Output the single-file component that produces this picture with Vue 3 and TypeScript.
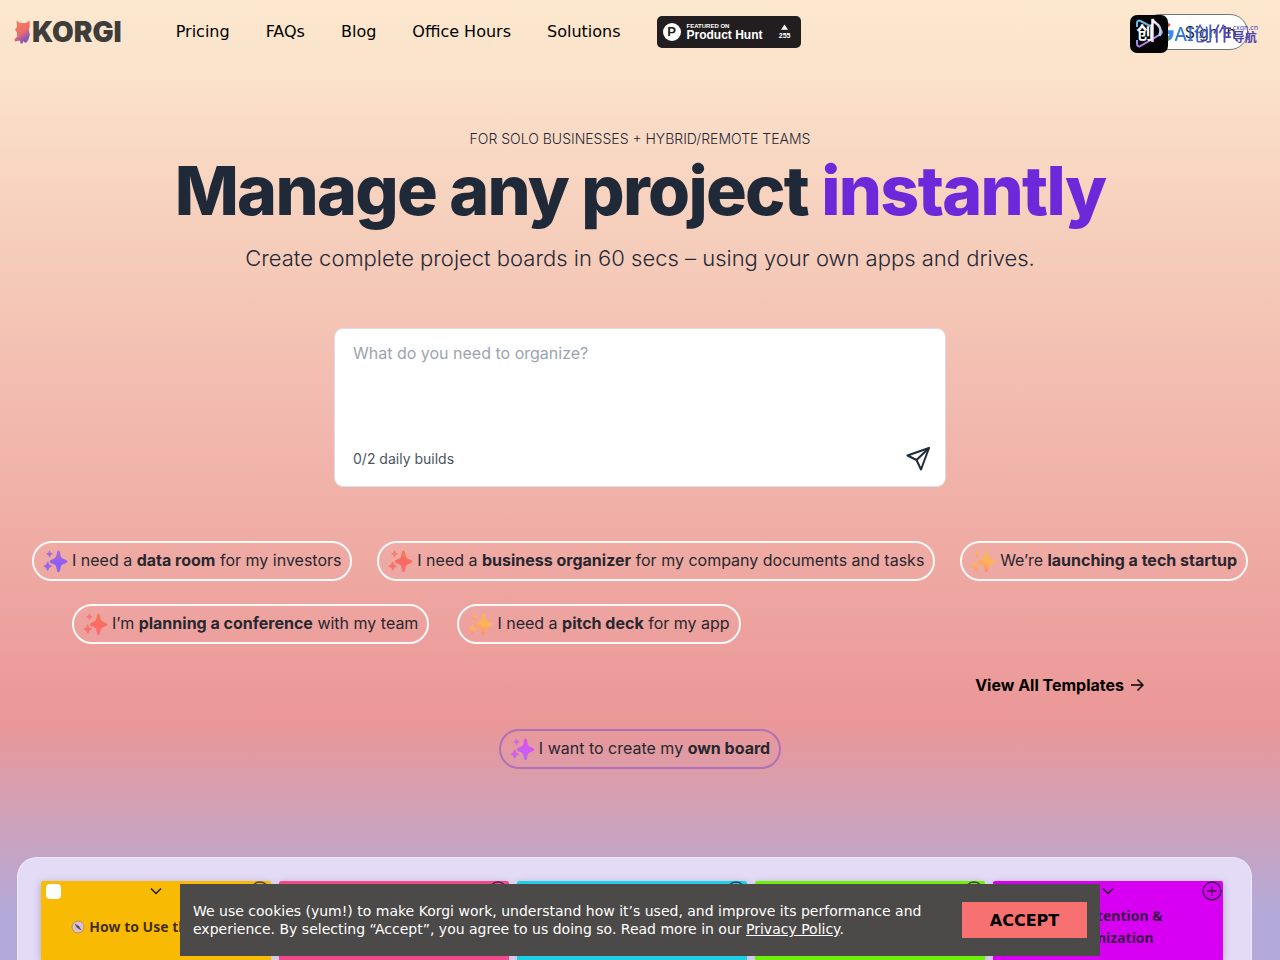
<script setup lang="ts">
import { ref } from 'vue'

interface Template {
  tone: string
  before: string
  strong: string
  after: string
}

interface BoardColumn {
  color: string
  lines: string[]
}

const prompt = ref('')
const cookiesVisible = ref(true)

const navLinks: string[] = ['Pricing', 'FAQs', 'Blog', 'Office Hours', 'Solutions']

const templateRows: Template[][] = [
  [
    { tone: 'violet', before: 'I need a ', strong: 'data room', after: ' for my investors' },
    { tone: 'coral', before: 'I need a ', strong: 'business organizer', after: ' for my company documents and tasks' },
    { tone: 'amber', before: 'We’re ', strong: 'launching a tech startup', after: '' },
  ],
  [
    { tone: 'coral', before: 'I’m ', strong: 'planning a conference', after: ' with my team' },
    { tone: 'amber', before: 'I need a ', strong: 'pitch deck', after: ' for my app' },
  ],
]

const columns: BoardColumn[] = [
  { color: 'yellow', lines: ['How to Use the Board'] },
  { color: 'pink', lines: [] },
  { color: 'cyan', lines: [] },
  { color: 'green', lines: [] },
  { color: 'magenta', lines: ['Retention &', 'Optimization'] },
]
</script>

<template>
  <div class="page">
    <svg class="defs" width="0" height="0" aria-hidden="true">
      <defs>
        <linearGradient id="tone-violet" x1="0" y1="0" x2="0" y2="1">
          <stop offset="0" stop-color="#b36bd0" />
          <stop offset="0.6" stop-color="#8b5cf6" />
          <stop offset="1" stop-color="#8467fa" />
        </linearGradient>
        <linearGradient id="tone-coral" x1="0.7" y1="0" x2="0.3" y2="1">
          <stop offset="0" stop-color="#f0805a" />
          <stop offset="0.5" stop-color="#fb6a60" />
          <stop offset="1" stop-color="#fb6f86" />
        </linearGradient>
        <linearGradient id="tone-amber" x1="0.7" y1="0" x2="0.3" y2="1">
          <stop offset="0" stop-color="#f2b758" />
          <stop offset="0.5" stop-color="#fdb35a" />
          <stop offset="1" stop-color="#fb8a6b" />
        </linearGradient>
        <linearGradient id="tone-orchid" x1="0.7" y1="0" x2="0.3" y2="1">
          <stop offset="0" stop-color="#e24fe8" />
          <stop offset="0.5" stop-color="#cf5bf3" />
          <stop offset="1" stop-color="#b66bf0" />
        </linearGradient>
        <linearGradient id="corgi" x1="0.3" y1="0" x2="0.8" y2="1">
          <stop offset="0" stop-color="#f47f5c" />
          <stop offset="0.5" stop-color="#ee6a6c" />
          <stop offset="0.75" stop-color="#9a5aa8" />
          <stop offset="1" stop-color="#6a55c4" />
        </linearGradient>
        <linearGradient id="mark" x1="0" y1="0" x2="0.4" y2="1">
          <stop offset="0" stop-color="#5ec4e6" />
          <stop offset="0.5" stop-color="#8e9be8" />
          <stop offset="1" stop-color="#c07be8" />
        </linearGradient>
        <linearGradient id="note" x1="0" y1="0" x2="1" y2="1">
          <stop offset="0" stop-color="#ffffff" />
          <stop offset="0.5" stop-color="#f3c9f6" />
          <stop offset="1" stop-color="#7fe6ee" />
        </linearGradient>
        <symbol id="sparkles" viewBox="0 0 24 24">
          <path d="M15 1.500c1 0 1.500 1.200 1.900 3.800.5 3.200 1.200 4 3.800 4.900 2 .7 3.100 1.200 3.100 2.300s-1.100 1.700-3.100 2.300c-2.600.9-3.300 1.700-3.800 4.700-.4 2.500-.9 3.700-1.900 3.700s-1.500-1.200-1.900-3.700c-.5-3-1.200-3.800-3.800-4.700-2-.6-3.100-1.200-3.100-2.300s1.100-1.600 3.100-2.300c2.600-.9 3.300-1.700 3.800-4.900.4-2.600.9-3.800 1.900-3.800z" />
          <path opacity="0.8" d="M6 1.500c.6 0 .7.800.9 1.500.2.600.5.800 1 .9.700.2 1.300.4 1.300.9s-.6.700-1.300.9c-.5.200-.8.400-1 1-.2.800-.3 1.500-.9 1.500s-.7-.7-.9-1.500c-.2-.6-.5-.8-1-1-.7-.2-1.300-.4-1.300-.9s.6-.7 1.300-.9c.5-.1.800-.3 1-.9.200-.7.300-1.500.9-1.500z" />
          <path opacity="0.9" d="M4.200 12.500c.7 0 .9 1 1.200 2 .3.900.7 1.200 1.400 1.400.8.300 1.500.5 1.500 1.200s-.7.900-1.500 1.200c-.7.200-1.100.6-1.400 1.500-.3 1-.5 1.900-1.200 1.900s-.9-.9-1.200-1.900c-.3-.9-.7-1.300-1.400-1.500-.8-.3-1.500-.5-1.500-1.200s.7-.9 1.500-1.200c.7-.2 1.100-.5 1.400-1.400.3-1 .5-2 1.200-2z" />
        </symbol>
      </defs>
    </svg>

    <header class="header">
      <a class="logo" href="#" aria-label="KORGI">
        <svg class="corgi" width="17" height="24" viewBox="0 0 17 24" aria-hidden="true">
          <path d="M2.500.5 6 3h6L15.500.5l.3 6-1 3 1 5.500-1.300 4.500-2 3H10.500L9.500 21 8.500 23.500H6.500L6 20.500 1 21.500l-.5-2.200 2.700-2.500-.2-4L1 9.500l2-2.500z" fill="url(#corgi)" />
        </svg>
        <span class="wordmark">KORGI</span>
      </a>

      <nav class="nav">
        <a v-for="link in navLinks" :key="link" href="#">{{ link }}</a>
      </nav>

      <a class="hunt" href="#">
        <span class="hunt-mark">P</span>
        <span class="hunt-text">
          <span class="hunt-small">FEATURED ON</span>
          <span class="hunt-name">Product Hunt</span>
        </span>
        <span class="hunt-votes">
          <svg width="7" height="6" viewBox="0 0 8 6" aria-hidden="true"><path d="M4 0l4 6H0z" fill="#fff" /></svg>
          255
        </span>
      </a>

      <div class="account">
        <button class="sign-in" type="button">
          <svg width="20" height="20" viewBox="0 0 24 24" aria-hidden="true">
            <path fill="#4285f4" d="M23.500 12.300c0-.8-.1-1.600-.2-2.300H12v4.500h6.500a5.500 5.500 0 0 1-2.400 3.600v3h3.900c2.200-2.100 3.500-5.100 3.500-8.800z" />
            <path fill="#34a853" d="M12 24c3.200 0 6-1.100 8-2.900l-3.900-3a7.200 7.200 0 0 1-10.800-3.800h-4v3.100A12 12 0 0 0 12 24z" />
            <path fill="#fbbc05" d="M5.300 14.300a7.200 7.200 0 0 1 0-4.600V6.600h-4a12 12 0 0 0 0 10.800z" />
            <path fill="#ea4335" d="M12 4.800c1.800 0 3.300.6 4.600 1.800l3.400-3.400A12 12 0 0 0 1.300 6.600l4 3.100A7.200 7.200 0 0 1 12 4.800z" />
          </svg>
          Sign in
        </button>
        <div class="stamp">
          <span class="stamp-icon">
            <svg width="38" height="38" viewBox="0 0 38 38" aria-hidden="true">
              <path d="M7 12V8c0-2 1.500-3 3.500-2L20 11M7 25v4c0 2 1.800 3 3.500 2l19-11c3-1.500 3-3.500 1-5" fill="none" stroke="url(#mark)" stroke-width="2" />
              <path d="M22.500 27V4c1 5 8 4 8 12l-1 5" fill="none" stroke="url(#note)" stroke-width="2.500" />
            </svg>
            <span class="stamp-glyph">创</span>
          </span>
          <span class="stamp-name">AI创作</span>
          <span class="stamp-side">
            <span class="stamp-host">cxgn.cn</span>
            <span class="stamp-nav">导航</span>
          </span>
        </div>
      </div>
    </header>

    <main class="main">
      <section class="hero">
        <p class="eyebrow">FOR SOLO BUSINESSES + HYBRID/REMOTE TEAMS</p>
        <h1>Manage any project <span>instantly</span></h1>
        <p class="lead">Create complete project boards in 60 secs – using your own apps and drives.</p>
      </section>

      <form class="composer" @submit.prevent>
        <textarea v-model="prompt" aria-label="What do you need to organize?" placeholder="What do you need to organize?"></textarea>
        <div class="composer-foot">
          <span>0/2 daily builds</span>
          <button type="submit" aria-label="Send">
            <svg width="24" height="24" viewBox="0 0 24 24" fill="none" stroke="#1f2937" stroke-width="2" stroke-linejoin="round" aria-hidden="true">
              <path d="M23 1 1.500 8.500 10.500 13 15 22.500z" />
              <path d="M23 1 10.500 13" />
            </svg>
          </button>
        </div>
      </form>

      <section class="templates">
        <div v-for="(row, i) in templateRows" :key="i" class="row" :class="{ inset: i === 1 }">
          <button v-for="item in row" :key="item.strong" class="pill" type="button">
            <svg width="25" height="24" :class="item.tone" aria-hidden="true"><use href="#sparkles" /></svg>
            <span class="pill-label">{{ item.before }}<strong>{{ item.strong }}</strong>{{ item.after }}</span>
          </button>
        </div>
      </section>

      <a class="view-all" href="#">
        View All Templates
        <svg width="14" height="14" viewBox="0 0 14 14" fill="none" stroke="#000" stroke-width="1.500" aria-hidden="true">
          <path d="M1 7h12M7.500 1.500 13 7l-5.500 5.500" />
        </svg>
      </a>

      <button class="pill own" type="button">
        <svg width="25" height="24" class="orchid" aria-hidden="true"><use href="#sparkles" /></svg>
        <span class="pill-label">I want to create my <strong>own board</strong></span>
      </button>

      <section class="board">
        <article v-for="col in columns" :key="col.color" class="column" :class="col.color">
          <div class="column-bar">
            <input type="checkbox" :aria-label="'Select ' + col.color + ' column'" />
            <svg width="12" height="8" viewBox="0 0 12 8" fill="none" stroke="#1f1a2c" stroke-width="1.500" aria-hidden="true">
              <path d="M1 1.500 6 6.500l5-5" />
            </svg>
            <svg class="plus" width="20" height="20" viewBox="0 0 20 20" fill="none" stroke="#1f1a2c" stroke-opacity="0.8" stroke-width="1.400" aria-hidden="true">
              <circle cx="10" cy="10" r="9" />
              <path d="M10 5v10M5 10h10" />
            </svg>
          </div>
          <h2 v-if="col.lines.length" :class="{ single: col.lines.length === 1 }">
            <span v-for="(line, n) in col.lines" :key="line" class="line">
              <svg v-if="n === 0" width="14" height="14" viewBox="0 0 14 14" aria-hidden="true">
                <circle cx="7" cy="7" r="6" fill="#d8c4c8" stroke="#b98f6a" stroke-width="1" />
                <path d="M3.500 3.500 8 6l2.500 4.500L6 8z" fill="#6a4a6c" />
              </svg>
              {{ line }}
            </span>
          </h2>
        </article>
      </section>
    </main>

    <aside v-if="cookiesVisible" class="cookies">
      <p>
        We use cookies (yum!) to make Korgi work, understand how it’s used, and improve its performance and experience. By
        selecting “Accept”, you agree to us doing so. Read more in our <a href="#">Privacy Policy</a>.
      </p>
      <button type="button" @click="cookiesVisible = false">ACCEPT</button>
    </aside>
  </div>
</template>

<style>
body {
  margin: 0;
}
</style>

<style scoped>
* {
  box-sizing: border-box;
}

.page {
  display: flex;
  flex-direction: column;
  height: 100vh;
  min-height: 940px;
  overflow: hidden;
  font-family: Inter, "Liberation Sans", sans-serif;
  color: #1f2937;
  background: linear-gradient(180deg, #fce7cf 0%, #fbe3cb 7%, #f5cab9 28%, #eb9797 75%, #b3a9d8 95%, #b3a9d8 100%);
}

.defs {
  position: absolute;
}

a {
  color: inherit;
  text-decoration: none;
}

button {
  font: inherit;
  color: inherit;
  cursor: pointer;
}

.header {
  display: flex;
  align-items: center;
  height: 64px;
  padding: 0 32px 0 14px;
}

.logo {
  display: flex;
  align-items: center;
  gap: 1px;
}

.wordmark {
  font-size: 28px;
  line-height: 32px;
  font-weight: 900;
  color: #3f3d3a;
}

.nav {
  display: flex;
  gap: 36px;
  margin-left: 54px;
  font-family: "DejaVu Sans", sans-serif;
  font-size: 16px;
  line-height: 24px;
  color: #000;
}

.hunt {
  display: flex;
  align-items: center;
  width: 144px;
  height: 32px;
  margin-left: 36px;
  padding: 0 10px 0 6px;
  border-radius: 5px;
  background: #221e20;
  color: #fff;
  font-family: "Liberation Sans", Arial, sans-serif;
  font-weight: 700;
}

.hunt-mark {
  width: 18px;
  height: 18px;
  border-radius: 50%;
  background: #fff;
  color: #221e20;
  font-size: 13px;
  line-height: 18px;
  text-align: center;
}

.hunt-text {
  display: flex;
  flex-direction: column;
  margin-left: 6px;
}

.hunt-small {
  font-size: 6px;
  line-height: 6px;
}

.hunt-name {
  font-size: 12px;
  line-height: 12px;
  white-space: nowrap;
}

.hunt-votes {
  display: flex;
  flex-direction: column;
  align-items: center;
  gap: 2px;
  margin-left: auto;
  font-size: 7px;
  line-height: 8px;
}

.account {
  position: relative;
  margin-left: auto;
}

.sign-in {
  display: flex;
  align-items: center;
  gap: 11px;
  height: 36px;
  padding: 0 11px;
  border: 1px solid #747775;
  border-radius: 18px;
  background: #fff;
  font-size: 16px;
  color: #1f1f1f;
}

.stamp {
  position: absolute;
  top: 1px;
  right: -10px;
  display: flex;
  align-items: center;
  font-family: "Noto Sans", "Noto Sans CJK SC", sans-serif;
  color: #4b3fb0;
  white-space: nowrap;
}

.stamp-icon {
  position: relative;
  width: 38px;
  height: 38px;
  border-radius: 7px;
  background: #050508;
}

.stamp-glyph {
  position: absolute;
  top: 8px;
  left: 7px;
  font-size: 17px;
  line-height: 20px;
  font-weight: 700;
  color: #fff;
}

.stamp-name {
  margin-left: 7px;
  font-size: 19px;
  line-height: 24px;
  font-weight: 500;
  color: transparent;
  background: linear-gradient(90deg, #2f7fe0, #5a3fb8);
  background-clip: text;
}

.stamp-side {
  display: flex;
  flex-direction: column;
  margin-left: 1px;
}

.stamp-host {
  font-size: 7px;
  line-height: 7px;
}

.stamp-nav {
  font-size: 12px;
  line-height: 14px;
  font-weight: 700;
}

.main {
  display: flex;
  flex: 1;
  flex-direction: column;
  min-height: 0;
}

.hero {
  padding: 65px 16px 0;
  text-align: center;
}

.eyebrow {
  margin: 0;
  font-size: 14px;
  line-height: 20px;
  font-weight: 300;
}

h1 {
  margin: 7px 0 0;
  font-size: 68px;
  line-height: 68px;
  font-weight: 800;
  letter-spacing: -0.025em;
}

h1 span {
  color: #6d28d9;
}

.lead {
  margin: 16px 0 0;
  font-size: 22px;
  line-height: 36px;
  font-weight: 300;
}

.composer {
  display: flex;
  flex-direction: column;
  width: min(612px, 90%);
  height: 159px;
  margin: 52px auto 0;
  padding: 12px 15px 13px 18px;
  border: 1px solid #dcdfe4;
  border-radius: 9px;
  background: #fff;
}

.composer textarea {
  flex: 1;
  padding: 0;
  border: 0;
  outline: 0;
  resize: none;
  font: inherit;
  font-size: 16px;
  line-height: 24px;
  color: #1f2937;
}

.composer textarea::placeholder {
  color: #9ca3af;
}

.composer-foot {
  display: flex;
  align-items: center;
  justify-content: space-between;
  font-size: 14px;
  line-height: 28px;
  color: #4b5563;
}

.composer-foot button {
  display: flex;
  padding: 0;
  border: 0;
  background: none;
}

.templates {
  display: flex;
  flex-direction: column;
  gap: 23px;
  padding: 54px 32px 0;
}

.row {
  display: flex;
  justify-content: space-between;
  gap: 24px;
}

.row.inset {
  justify-content: flex-start;
  gap: 28px;
  padding-left: 40px;
}

.pill {
  display: flex;
  align-items: center;
  gap: 4px;
  height: 40px;
  padding: 0 9px;
  border: 2px solid #fffaf8;
  border-radius: 20px;
  background: none;
  font-size: 16px;
  line-height: 24px;
  color: #28272f;
  white-space: nowrap;
}

.pill-label {
  padding-bottom: 2px;
}

.violet {
  fill: url(#tone-violet);
}

.coral {
  fill: url(#tone-coral);
}

.amber {
  fill: url(#tone-amber);
}

.orchid {
  fill: url(#tone-orchid);
}

.view-all {
  display: flex;
  align-items: center;
  align-self: flex-end;
  gap: 6px;
  margin: 29px 136px 0 0;
  font-size: 16px;
  line-height: 24px;
  font-weight: 700;
  color: #000;
}

.own {
  align-self: center;
  margin-top: 32px;
  border-color: #b070b8;
}

.board {
  display: flex;
  flex: 1;
  gap: 8px;
  margin: 88px 28px 0 17px;
  padding: 23px 28px 0 23px;
  border: 1px solid #efeafa;
  border-bottom: 0;
  border-radius: 20px 20px 0 0;
  background: #e4dcf7;
  min-height: 0;
}

.column {
  flex: 1;
  border-radius: 2px 2px 0 0;
  box-shadow: 0 2px 8px rgba(60, 40, 100, 0.3);
}

.column-bar {
  display: flex;
  align-items: center;
  justify-content: space-between;
  height: 20px;
  padding: 0 1px 0 5px;
}

.column-bar input {
  appearance: none;
  width: 15px;
  height: 15px;
  margin: 0;
  border-radius: 4px;
  background: #fff;
}

.yellow {
  background: #f8ba02;
}

.pink {
  background: #f04a8c;
}

.cyan {
  background: #1fcfe6;
}

.green {
  background: #6ef00a;
}

.magenta {
  background: #d800f2;
}

h2 {
  display: flex;
  flex-direction: column;
  align-items: center;
  margin: 4px 0 0;
  font-family: "Noto Sans", "Open Sans", sans-serif;
  font-size: 14px;
  line-height: 22px;
  font-weight: 700;
  color: rgba(20, 12, 30, 0.82);
}

h2.single {
  margin-top: 15px;
}

.line {
  display: flex;
  align-items: center;
  gap: 4px;
}

.magenta .line {
  gap: 12px;
}

.cookies {
  position: fixed;
  bottom: 4px;
  left: 50%;
  display: flex;
  align-items: center;
  gap: 28px;
  width: min(920px, 100%);
  margin-left: max(-460px, -50vw);
  padding: 18px 13px;
  background: #4c4a48;
  color: #fff;
  font-family: "DejaVu Sans", sans-serif;
}

.cookies p {
  flex: 1;
  margin: 0;
  font-size: 14px;
  line-height: 18px;
}

.cookies a {
  text-decoration: underline;
}

.cookies button {
  width: 125px;
  height: 36px;
  border: 0;
  background: #f87171;
  color: #000;
  font-size: 16px;
  font-weight: 700;
}
</style>
